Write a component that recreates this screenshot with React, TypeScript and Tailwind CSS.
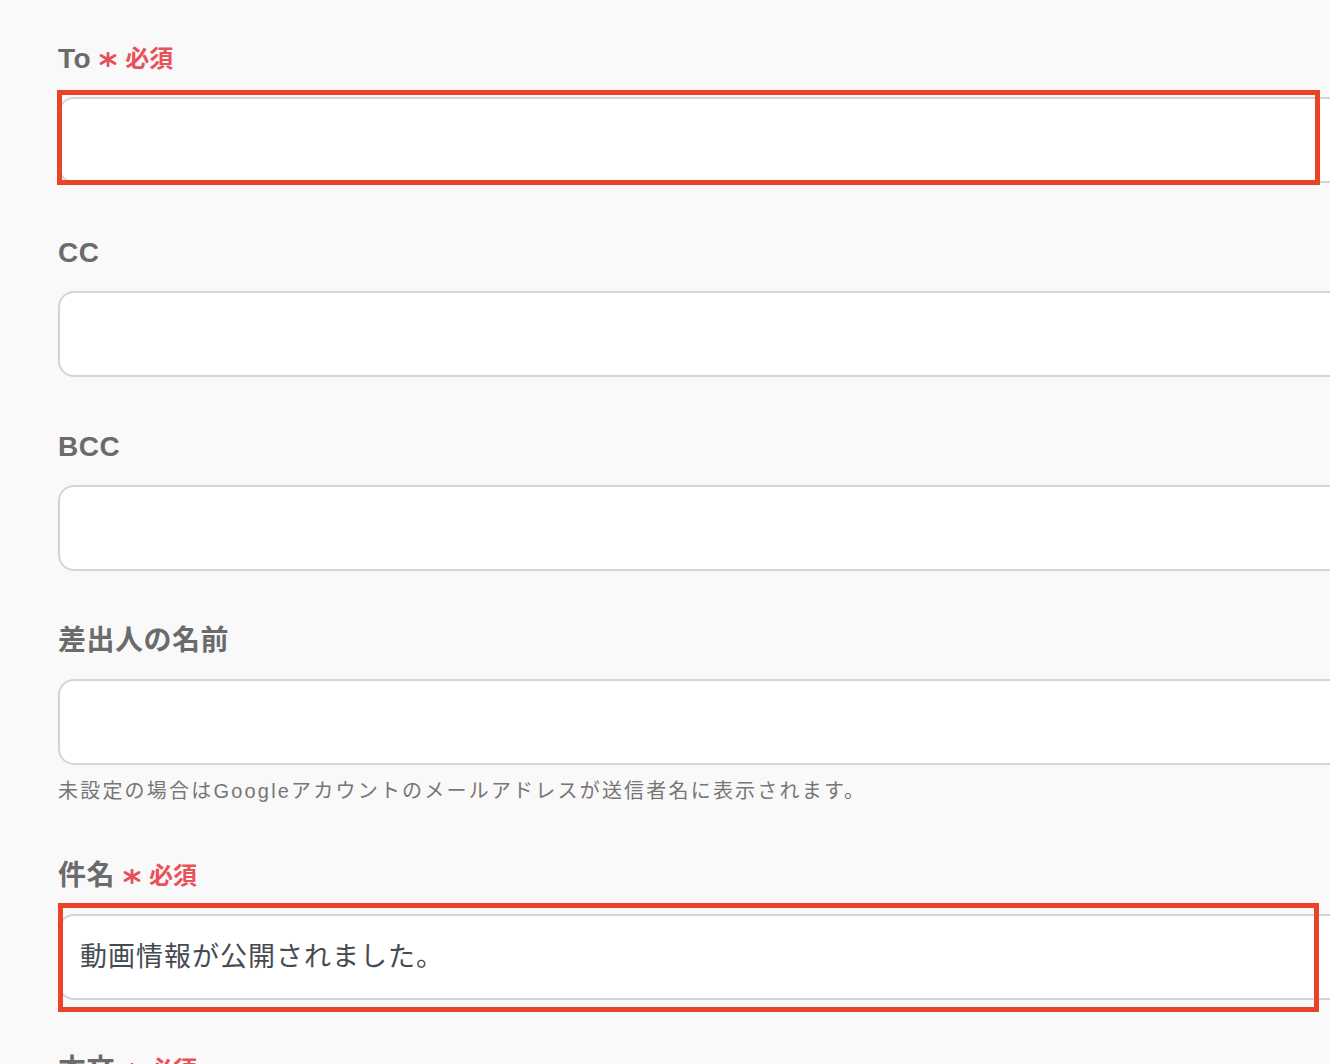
const fontStack = "font-['Liberation_Sans','Noto_Sans_CJK_JP',sans-serif]";

function Asterisk() {
  return (
    <svg width="18" height="15" viewBox="0 0 18 15" className="shrink-0">
      <g stroke="#e8505a" strokeWidth="2.8" strokeLinecap="round">
        <line x1="9" y1="1.2" x2="9" y2="13.8" />
        <line x1="2" y1="3.5" x2="16" y2="11.5" />
        <line x1="2" y1="11.5" x2="16" y2="3.5" />
      </g>
    </svg>
  );
}

interface FieldLabelProps {
  text: string;
  required?: boolean;
}

function FieldLabel({ text, required }: FieldLabelProps) {
  return (
    <div className="flex h-[36px] items-center gap-[8px]">
      <span className="text-[28px] leading-[36px] font-bold tracking-[0.5px] text-[#6b6b6b]">{text}</span>
      {required && (
        <>
          <Asterisk />
          <span className="text-[24px] leading-[36px] font-bold text-[#e8505a]">必須</span>
        </>
      )}
    </div>
  );
}

interface FieldProps {
  label: string;
  required?: boolean;
  value?: string;
  help?: string;
  highlight?: "to" | "subject";
}

function Field({ label, required, value, help, highlight }: FieldProps) {
  return (
    <div className={help ? "mb-[53px]" : "mb-[52px]"}>
      <FieldLabel text={label} required={required} />
      <div className="relative mt-[20px]">
        <div className="flex h-[86px] w-[1320px] items-center rounded-[16px] border-2 border-[#d1d5db] bg-white px-[20px]">
          {value && <span className="text-[27px] tracking-[1px] text-[#464b52]">{value}</span>}
        </div>
        {highlight === "to" && (
          <div className="pointer-events-none absolute -top-[7px] -left-[1px] h-[95px] w-[1263px] border-[5px] border-[#ea4427]" />
        )}
        {highlight === "subject" && (
          <div className="pointer-events-none absolute -top-[11px] left-0 h-[109px] w-[1261px] border-[5px] border-[#ea4427]" />
        )}
      </div>
      {help && <p className="mt-[12px] text-[20px] leading-[28px] tracking-[2.2px] text-[#767676]">{help}</p>}
    </div>
  );
}

export default function App() {
  return (
    <div className={`h-[1064px] w-full overflow-hidden bg-[#f9f9f9] pt-[41px] pl-[58px] ${fontStack}`}>
      <Field label="To" required highlight="to" />
      <Field label="CC" />
      <Field label="BCC" />
      <Field label="差出人の名前" help="未設定の場合はGoogleアカウントのメールアドレスが送信者名に表示されます。" />
      <Field label="件名" required value="動画情報が公開されました。" highlight="subject" />
      <Field label="本文" required />
    </div>
  );
}
